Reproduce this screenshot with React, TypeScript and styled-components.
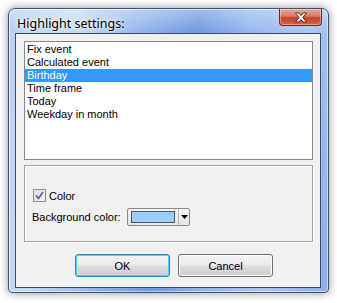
import React from 'react';
import styled, { createGlobalStyle } from 'styled-components';

const GlobalStyle = createGlobalStyle`
  body {
    margin: 0;
    background: #ffffff;
    font-family: "Liberation Sans", Arial, sans-serif;
  }
`;

const Desktop = styled.div`
  padding: 8px;
  width: 337px;
  height: 303px;
  box-sizing: border-box;
`;

const Window = styled.div`
  width: 321px;
  height: 285px;
  box-sizing: border-box;
  border: 1px solid #3f5577;
  border-radius: 7px 7px 4px 4px;
  padding: 0 7px 4px 6px;
  display: flex;
  flex-direction: column;
  background:
    linear-gradient(180deg, rgba(255, 255, 255, 0.35) 0px, rgba(255, 255, 255, 0) 24px),
    linear-gradient(
      100deg,
      #b7cff2 0%,
      #c9dbf6 18%,
      #8fb1ea 38%,
      #6f98e0 52%,
      #93b5ec 66%,
      #a9c6f1 82%,
      #8caee8 100%
    );
  box-shadow: 0 0 8px rgba(0, 0, 0, 0.45), inset 0 0 0 1px rgba(255, 255, 255, 0.5);
`;

const TitleBar = styled.div`
  height: 24px;
  display: flex;
  justify-content: space-between;
  align-items: flex-start;
`;

const Title = styled.span`
  font-family: "Noto Sans", "Liberation Sans", sans-serif;
  font-size: 12.5px;
  color: #000;
  margin: 6px 0 0 2px;
  text-shadow: 0 0 6px rgba(255, 255, 255, 0.9), 0 0 3px rgba(255, 255, 255, 0.9);
`;

const CloseButton = styled.div`
  width: 43px;
  height: 17px;
  box-sizing: border-box;
  margin-right: -1px;
  border: 1px solid #6b2a22;
  border-top: none;
  border-radius: 0 0 4px 4px;
  background: linear-gradient(180deg, #e8a99e 0%, #d8796a 45%, #c0432f 55%, #d5644d 100%);
  box-shadow: inset 0 0 0 1px rgba(255, 255, 255, 0.35);
  display: flex;
  align-items: center;
  justify-content: center;
`;

const Client = styled.div`
  flex: 1;
  border: 1px solid #3a4c69;
  background: #f0f0f0;
  padding: 7px 7px 10px 8px;
  display: flex;
  flex-direction: column;
`;

const ListBox = styled.div`
  height: 119px;
  box-sizing: border-box;
  border: 1px solid #828790;
  background: #fff;
  padding-top: 1px;
`;

const ListItem = styled.div<{ $selected?: boolean }>`
  height: 13px;
  line-height: 13px;
  font-size: 11px;
  padding-left: 2px;
  color: ${(p) => (p.$selected ? '#fff' : '#000')};
  background: ${(p) => (p.$selected ? '#3399ff' : 'transparent')};
`;

const Panel = styled.div`
  margin-top: 5px;
  height: 77px;
  box-sizing: border-box;
  border: 1px solid #a0a0a0;
  box-shadow: inset 1px 1px 0 #fff, 1px 1px 0 #fff;
  padding: 23px 0 0 8px;
  display: flex;
  flex-direction: column;
  gap: 6px;
`;

const CheckRow = styled.label`
  display: flex;
  align-items: center;
  gap: 3px;
  font-size: 11px;
  height: 13px;
`;

const CheckBox = styled.span`
  width: 13px;
  height: 13px;
  box-sizing: border-box;
  border: 1px solid #8e8f8f;
  background: linear-gradient(135deg, #dcdcdc 0%, #f4f4f4 100%);
  display: flex;
  align-items: center;
  justify-content: center;
`;

const ColorRow = styled.div`
  display: flex;
  align-items: center;
  font-size: 11px;
  margin-left: -1px;
`;

const ColorLabel = styled.span`
  width: 95px;
`;

const ComboBox = styled.div`
  width: 63px;
  height: 18px;
  box-sizing: border-box;
  border: 1px solid #8a8a8a;
  border-radius: 2px;
  background: linear-gradient(180deg, #f6f6f6 0%, #e4e4e4 100%);
  display: flex;
  align-items: center;
  padding-left: 3px;
`;

const Swatch = styled.span<{ $color: string }>`
  width: 44px;
  height: 12px;
  box-sizing: border-box;
  border: 1px solid #555;
  background: ${(p) => p.$color};
`;

const DropArrow = styled.span`
  flex: 1;
  height: 100%;
  margin-left: 3px;
  border-left: 1px solid #b8b8b8;
  display: flex;
  align-items: center;
  justify-content: center;
`;

const ButtonRow = styled.div`
  margin-top: auto;
  display: flex;
  gap: 8px;
  padding-left: 51px;
`;

const Button = styled.button<{ $focused?: boolean }>`
  width: 95px;
  height: 23px;
  box-sizing: border-box;
  border: 1px solid ${(p) => (p.$focused ? '#3c7fb1' : '#707070')};
  border-radius: 3px;
  background: linear-gradient(180deg, #f2f2f2 0%, #ebebeb 48%, #dddddd 52%, #cfcfcf 100%);
  box-shadow: inset 0 0 0 1px ${(p) => (p.$focused ? '#48d7fb' : '#fcfcfc')};
  font-family: "Liberation Sans", Arial, sans-serif;
  font-size: 11px;
  color: #000;
  padding: 0;
`;

const items = ['Fix event', 'Calculated event', 'Birthday', 'Time frame', 'Today', 'Weekday in month'];

export default function App() {
  return (
    <Desktop>
      <GlobalStyle />
      <Window>
        <TitleBar>
          <Title>Highlight settings:</Title>
          <CloseButton>
            <svg width="14" height="11" viewBox="0 0 14 11">
              <path
                d="M1.5 1 H5 L7 3.5 L9 1 H12.5 L8.8 5.5 L12.5 10 H9 L7 7.5 L5 10 H1.5 L5.2 5.5 Z"
                fill="#ffffff"
                stroke="#5a2a24"
                strokeWidth="1"
                strokeLinejoin="round"
              />
            </svg>
          </CloseButton>
        </TitleBar>
        <Client>
          <ListBox>
            {items.map((it) => (
              <ListItem key={it} $selected={it === 'Birthday'}>
                {it}
              </ListItem>
            ))}
          </ListBox>
          <Panel>
            <CheckRow>
              <CheckBox>
                <svg width="9" height="9" viewBox="0 0 9 9">
                  <path d="M1 4.5 L3.5 7.5 L8 1" fill="none" stroke="#4a5f97" strokeWidth="1.6" />
                </svg>
              </CheckBox>
              Color
            </CheckRow>
            <ColorRow>
              <ColorLabel>Background color:</ColorLabel>
              <ComboBox>
                <Swatch $color="#99ccff" />
                <DropArrow>
                  <svg width="7" height="4" viewBox="0 0 7 4">
                    <path d="M0 0 H7 L3.5 4 Z" fill="#000" />
                  </svg>
                </DropArrow>
              </ComboBox>
            </ColorRow>
          </Panel>
          <ButtonRow>
            <Button $focused>OK</Button>
            <Button>Cancel</Button>
          </ButtonRow>
        </Client>
      </Window>
    </Desktop>
  );
}
